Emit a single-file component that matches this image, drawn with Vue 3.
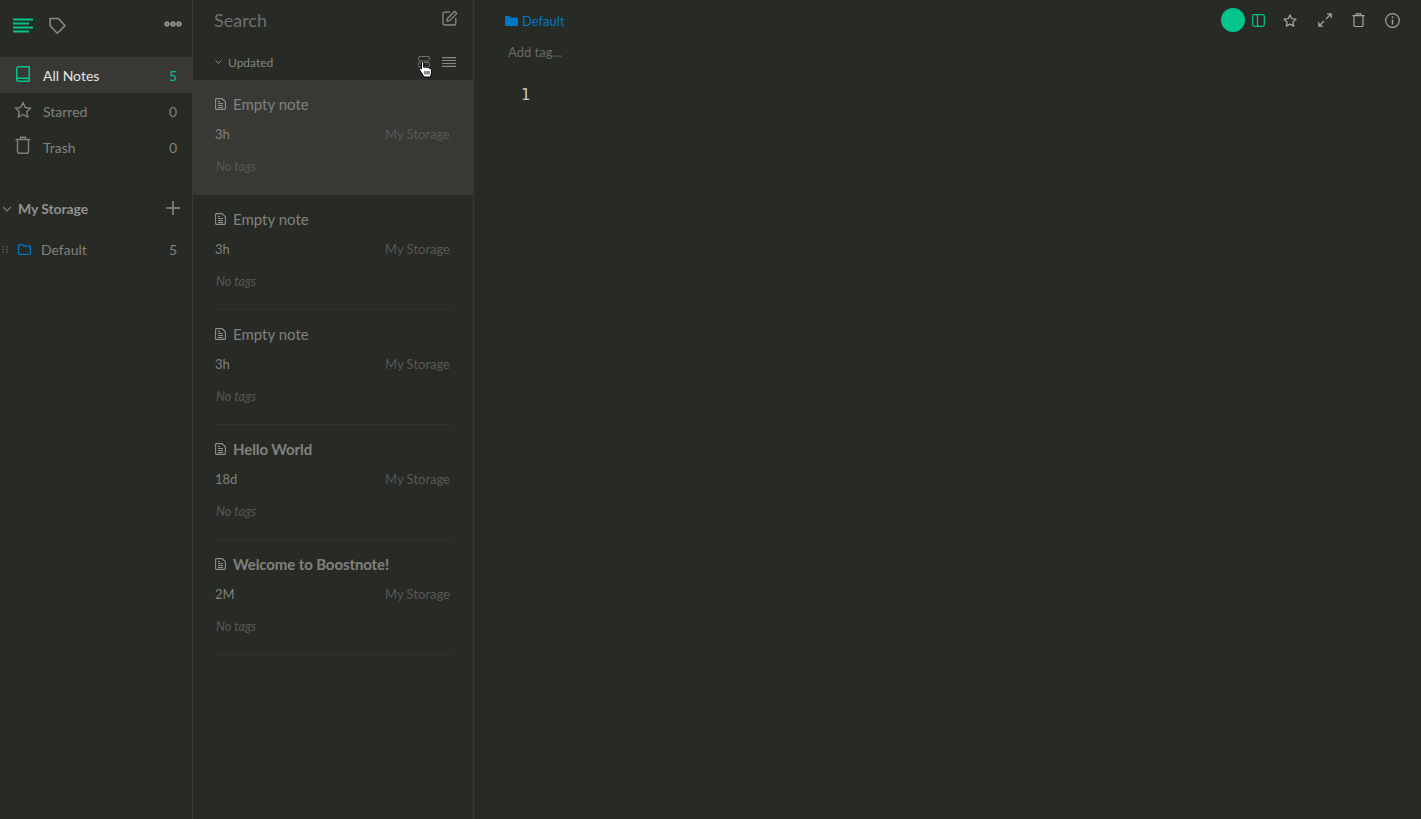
<script setup>
const notes = [
  { title: 'Empty note', age: '3h', bold: false, active: true },
  { title: 'Empty note', age: '3h', bold: false },
  { title: 'Empty note', age: '3h', bold: false },
  { title: 'Hello World', age: '18d', bold: true },
  { title: 'Welcome to Boostnote!', age: '2M', bold: true },
]
</script>

<template>
  <div class="app">
    <aside class="side">
      <div class="side-top">
        <svg class="ic-menu" width="22" height="16" viewBox="0 0 22 16"><path d="M1 1.500h20M1 5.500h16M1 9.500h20M1 13.500h16" stroke="#02c58c" stroke-width="2" fill="none"/></svg>
        <svg class="ic-tag" width="18" height="18" viewBox="0 0 18 18"><path d="M1 1.500h8.500L16 8.700l-7.700 7.500-7-7.200z" stroke="#8a8a88" stroke-width="1.600" fill="none" stroke-linejoin="round"/></svg>
        <svg class="ic-more" width="18" height="6" viewBox="0 0 18 6"><g fill="none" stroke="#8f8f8d" stroke-width="2"><circle cx="3" cy="3" r="1.700"/><circle cx="9" cy="3" r="1.700"/><circle cx="15" cy="3" r="1.700"/></g></svg>
      </div>
      <nav class="nav">
        <div class="nav-row active">
          <svg width="14" height="16" viewBox="0 0 14 16" class="nav-ic book"><path d="M.8 13.500V2.300A1.500 1.500 0 0 1 2.300.8h10.900v14.400H2.300A1.500 1.500 0 0 1 .8 13.500zM.8 12.200h12.400" fill="none" stroke="#02c58c" stroke-width="1.500"/></svg>
          <span class="nav-label">All Notes</span><span class="count green">5</span>
        </div>
        <div class="nav-row">
          <svg width="18" height="17" viewBox="0 0 18 17" class="nav-ic star"><path d="M9 1.500l2.300 5 5.400.6-4 3.700 1.100 5.400L9 13.500l-4.800 2.700 1.100-5.400-4-3.700 5.400-.6z" fill="none" stroke="#7f807d" stroke-width="1.400" stroke-linejoin="round"/></svg>
          <span class="nav-label">Starred</span><span class="count">0</span>
        </div>
        <div class="nav-row">
          <svg width="16" height="18" viewBox="0 0 16 18" class="nav-ic"><path d="M.5 3.500h15M5.500 3.500V1.200h5v2.300M2.500 3.500v12.300a1.500 1.500 0 0 0 1.500 1.500h8a1.500 1.500 0 0 0 1.500-1.500V3.500" fill="none" stroke="#7f807d" stroke-width="1.400"/></svg>
          <span class="nav-label">Trash</span><span class="count">0</span>
        </div>
      </nav>
      <div class="storage">
        <svg width="10" height="6" viewBox="0 0 10 6" class="chev"><path d="M1 1l4 4 4-4" fill="none" stroke="#7d7e7b" stroke-width="1.100"/></svg>
        <span class="storage-name">My Storage</span>
        <svg width="14" height="14" viewBox="0 0 14 14" class="plus"><path d="M7 0v14M0 7h14" stroke="#8f8f8d" stroke-width="1.400"/></svg>
      </div>
      <div class="folder">
        <svg width="6" height="7" viewBox="0 0 6 7" class="grip"><path d="M0 0h2v1.600H0zM4 0h2v1.600H4zM0 2.700h2v1.600H0zM4 2.700h2v1.600H4zM0 5.400h2V7H0zM4 5.400h2V7H4z" fill="#4d4e4b"/></svg>
        <svg width="13" height="11" viewBox="0 0 13 11" class="folder-ic"><path d="M.6 1.500a.8.800 0 0 1 .8-.8h3.100l1.200 1.500h5.900a.8.800 0 0 1 .8.800v6.300a1 1 0 0 1-1 1H1.600a1 1 0 0 1-1-1z" fill="none" stroke="#0077c4" stroke-width="1.200"/></svg>
        <span class="folder-name">Default</span><span class="count">5</span>
      </div>
    </aside>

    <section class="list">
      <div class="search">
        <span>Search</span>
        <svg width="16" height="16" viewBox="0 0 16 16"><path d="M8 2.200H2.500A1.500 1.500 0 0 0 1 3.700v9.800A1.500 1.500 0 0 0 2.500 15h9.800a1.500 1.500 0 0 0 1.500-1.500V8M5.500 8.500L12.600 1.200l2.200 2.200-7.200 7.200-2.600.5z" fill="none" stroke="#8a8a88" stroke-width="1.300" stroke-linejoin="round"/></svg>
      </div>
      <div class="sort">
        <svg width="7" height="4" viewBox="0 0 7 4" class="sort-chev"><path d="M.5.500l3 3 3-3" fill="none" stroke="#8a8a88" stroke-width="1"/></svg>
        <span class="sort-label">Updated</span>
        <div class="view-btns">
          <div class="view-a">
            <svg width="12" height="12" viewBox="0 0 12 12"><rect x=".5" y=".5" width="11" height="4.500" rx="1.500" fill="none" stroke="#6f706d"/><rect x=".5" y="6.500" width="11" height="4.500" rx="1.500" fill="none" stroke="#6f706d"/></svg>
            <svg class="cursor" width="14" height="17" viewBox="0 0 14 17"><path d="M2.500 1.800c0-1.300 2.200-1.300 2.200 0V6.300l1.800-.3 1.500.4 1.500.2 1.700.9c.9.5 1.300 1.200 1.300 2.200v2.200L11.500 16H5L2.500 12 .6 8.800c-.5-1 .8-2 1.900-.9z" fill="#fff" stroke="#000" stroke-width="1"/><path d="M6 10v3.500M8 10v3.500M10 10v3.500" stroke="#000" stroke-width=".9"/></svg>
          </div>
          <svg width="14" height="10" viewBox="0 0 14 10"><path d="M0 .6h14M0 3.500h14M0 6.500h14M0 9.400h14" stroke="#888987" stroke-width="1.200"/></svg>
        </div>
      </div>
      <article v-for="(n, i) in notes" :key="i" class="note" :class="{ selected: n.active }">
        <div class="note-body">
          <div class="note-title" :class="{ bold: n.bold }">
            <svg width="11" height="12" viewBox="0 0 11 12"><path d="M.6 1.200a.6.600 0 0 1 .6-.6h5.900l3.300 3.200v7a.6.600 0 0 1-.6.600H1.200a.6.600 0 0 1-.6-.6zM3 5.500h5M3 7.500h5M3 9.500h5M3 3.500h2" fill="none" stroke="#8f8f8d" stroke-width="1.100"/></svg>
            <span>{{ n.title }}</span>
          </div>
          <div class="note-meta"><span class="age">{{ n.age }}</span><span class="store">My Storage</span></div>
          <div class="tags">No tags</div>
        </div>
      </article>
    </section>

    <main class="editor">
      <div class="bar">
        <div class="crumb">
          <svg width="13" height="10" viewBox="0 0 13 10"><path d="M0 1a1 1 0 0 1 1-1h3.500l1.300 1.500H12a1 1 0 0 1 1 1V9a1 1 0 0 1-1 1H1a1 1 0 0 1-1-1z" fill="#0077c4"/></svg>
          <span>Default</span>
        </div>
        <div class="actions">
          <span class="dot"></span>
          <svg class="a-split" width="13" height="13" viewBox="0 0 13 13"><rect x=".7" y=".7" width="11.600" height="11.600" rx="1.500" fill="none" stroke="#02c58c" stroke-width="1.200"/><path d="M5.500 1v11" stroke="#02c58c" stroke-width="1.200"/></svg>
          <svg class="a-star" width="14" height="13" viewBox="0 0 14 13"><path d="M7 1l1.800 3.700 4.100.5-3 2.900.8 4L7 10.200l-3.700 1.900.8-4-3-2.900 4.100-.5z" fill="none" stroke="#a3a3a1" stroke-width="1.300" stroke-linejoin="round"/></svg>
          <svg class="a-expand" width="14" height="14" viewBox="0 0 14 14"><path d="M8 6l5-5M9 .8h4.200V5M6 8l-5 5M.8 9v4.200H5" fill="none" stroke="#a3a3a1" stroke-width="1.300"/></svg>
          <svg class="a-trash" width="13" height="14" viewBox="0 0 13 14"><path d="M.5 2.700h12M4.200 2.700V.8h4.600v1.900M2 2.700v9.600a1.200 1.200 0 0 0 1.200 1.200h6.600a1.200 1.200 0 0 0 1.200-1.200V2.700" fill="none" stroke="#a3a3a1" stroke-width="1.200"/></svg>
          <svg class="a-info" width="15" height="15" viewBox="0 0 15 15"><circle cx="7.500" cy="7.500" r="6.800" fill="none" stroke="#a3a3a1" stroke-width="1.200"/><path d="M7.500 6.500v5" stroke="#a3a3a1" stroke-width="1.400"/><circle cx="7.500" cy="4.200" r=".9" fill="#a3a3a1"/></svg>
        </div>
      </div>
      <div class="add-tag">Add tag...</div>
      <div class="code"><span>1</span></div>
    </main>
  </div>
</template>

<style>
html, body { margin: 0; background: #282a25; }
</style>

<style scoped>
.app { display: flex; height: 819px; width: 1421px; overflow: hidden; background: #282a25; font-family: Lato, "Liberation Sans", sans-serif; }
svg { display: block; flex: none; }

.side { width: 192px; flex: none; border-right: 1px solid #393b36; box-sizing: content-box; }
.side-top { height: 57px; display: flex; align-items: flex-start; box-sizing: border-box; padding: 18px 10px 0 12px; }
.ic-tag { margin: -1px 0 0 15px; }
.ic-more { margin: 3px 0 0 auto; }
.nav-row { height: 36px; display: flex; align-items: center; padding: 0 15px; color: #80817e; font-size: 14px; }
.nav-row.active { background: #383935; color: #e6e6e5; }
.nav-ic { margin-right: 12px; position: relative; top: -2px; }
.nav-ic.book { margin-left: 1px; margin-right: 13px; top: -1px; }
.nav-ic.star { margin-left: -1px; margin-right: 11px; }
.nav-label { flex: 1; }
.count { color: #80817e; font-size: 14px; }
.count.green { color: #02c58c; }
.storage { height: 36px; margin-top: 25px; display: flex; align-items: center; padding: 0 12px 0 2px; }
.chev { margin: 1px 6px 0 0; }
.storage-name { flex: 1; color: #90918e; font-size: 14px; font-weight: 700; letter-spacing: -0.1px; }
.folder { height: 36px; margin-top: 5px; display: flex; align-items: center; padding: 0 15px 0 2px; }
.grip { margin-right: 10px; }
.folder-ic { margin-right: 10px; }
.folder-name { flex: 1; color: #80817e; font-size: 14px; }

.list { width: 280px; flex: none; border-right: 1px solid #393b36; }
.search { height: 44px; box-sizing: border-box; padding: 10px 15px 0 21px; display: flex; justify-content: space-between; align-items: flex-start; color: #6f706d; font-size: 18px; line-height: 21px; }
.sort { height: 36px; box-sizing: border-box; padding: 0 17px 0 22px; display: flex; align-items: center; }
.sort-chev { margin-right: 6px; }
.sort-label { color: #858683; font-size: 12px; }
.view-btns { margin-left: auto; display: flex; align-items: center; gap: 12px; }
.view-a { position: relative; }
.cursor { position: absolute; left: 1px; top: 5px; }
.note { height: 115px; box-sizing: border-box; padding: 0 20px; }
.note.selected { background: #383935; }
.note-body { height: 115px; box-sizing: border-box; border-bottom: 1px solid #30322d; padding-top: 14px; }
.note.selected .note-body { border-bottom-color: transparent; }
.note-title { display: flex; align-items: center; color: #80817e; font-size: 15px; line-height: 20px; padding-left: 2px; }
.note-title svg { margin-right: 7px; }
.note-title.bold { font-weight: 700; letter-spacing: -0.1px; }
.note-meta { display: flex; justify-content: space-between; margin-top: 12px; font-size: 13px; line-height: 16px; padding: 0 3px 0 2px; }
.age { color: #80817e; }
.store { color: #575855; }
.tags { margin-top: 17px; padding-left: 3px; color: #575855; font-size: 12.600px; font-style: italic; line-height: 16px; }

.editor { flex: 1; min-width: 0; }
.bar { height: 40px; display: flex; justify-content: space-between; align-items: flex-start; padding: 8px 21px 0 31px; box-sizing: border-box; }
.crumb { display: flex; align-items: center; gap: 4px; color: #0077c4; font-size: 13px; line-height: 26px; }
.actions { display: flex; align-items: center; height: 24px; }
.dot { width: 24px; height: 24px; border-radius: 50%; background: #02c58c; }
.a-split { margin-left: 7px; }
.a-star { margin-left: 18px; }
.a-expand { margin-left: 21px; }
.a-trash { margin-left: 20px; }
.a-info { margin-left: 20px; }
.add-tag { margin: 3px 0 0 34px; color: #6a6b68; font-size: 13px; line-height: 18px; }
.code { margin: 24px 0 0 47px; color: #c9c9c7; font-family: "DejaVu Sans Mono", monospace; font-size: 15px; line-height: 20px; }
</style>
